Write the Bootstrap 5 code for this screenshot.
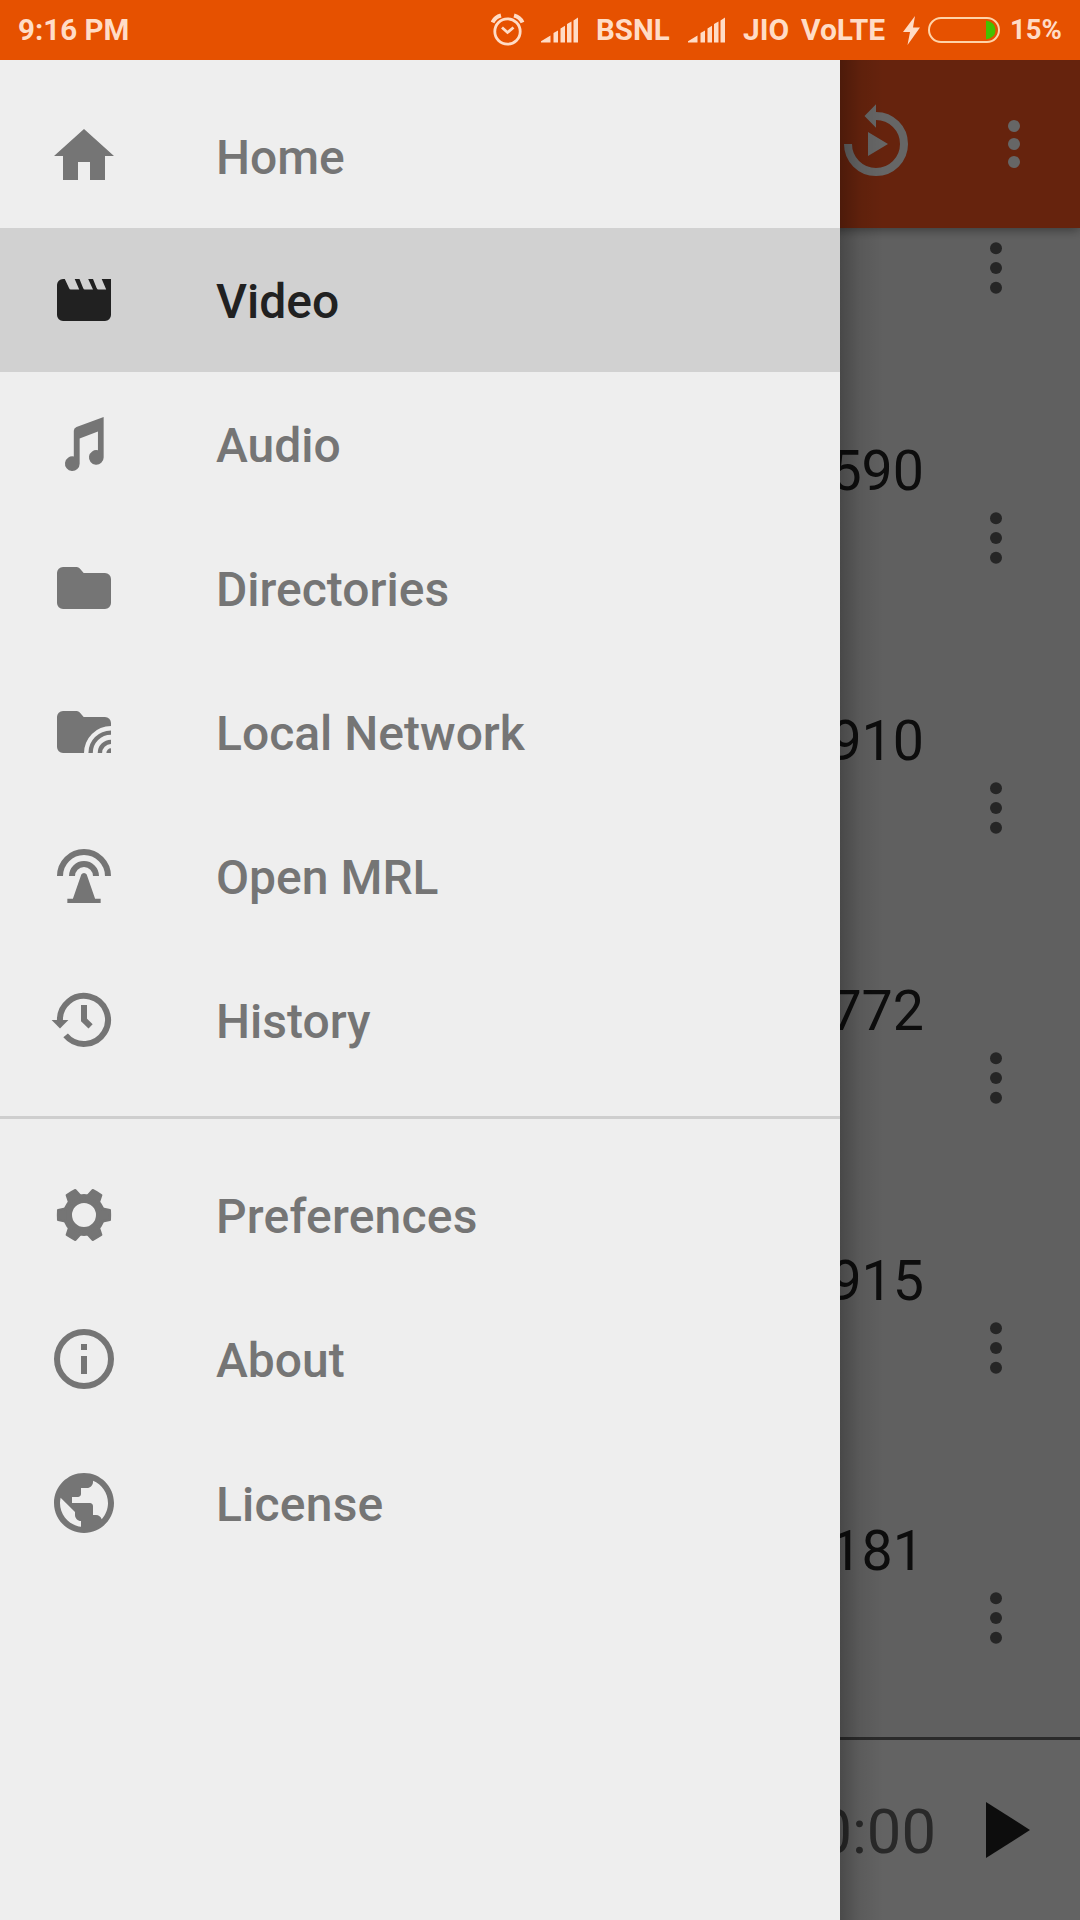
<!DOCTYPE html>
<html lang="en">
<head>
<meta charset="utf-8">
<meta name="viewport" content="width=device-width, initial-scale=1">
<title>Video</title>
<link href="https://cdn.jsdelivr.net/npm/bootstrap@5.3.0/dist/css/bootstrap.min.css" rel="stylesheet">
<style>
  body { font-family: Roboto, "Liberation Sans", sans-serif; background: #f0f0f0; }
  .screen { width: 1080px; height: 1920px; }
  svg { display: block; flex: none; }

  .status { height: 60px; background: #e65100; color: #ffdcc6; font-size: 30px; font-weight: 700; line-height: 60px; padding: 0 17px 0 18px; z-index: 5; white-space: nowrap; }
  .st-clock { font-size: 29.5px; }
  .st-alarm { width: 50px; }
  .st-signal { width: 55px; }
  .st-bsnl { width: 92px; font-size: 29.5px; }
  .st-jio { width: 58px; }
  .st-volte { width: 102px; }
  .st-bolt { width: 25px; }
  .st-battery { width: 82px; }
  .st-pct { width: 53px; font-size: 27.5px; }

  .appbar { height: 168px; background: #ff5722; color: #fff; padding-right: 48px; gap: 84px; box-shadow: 0 2px 10px rgba(0,0,0,.4); z-index: 1; }
  .media-list { height: 1509px; }
  .media-item { height: 270px; padding: 72px 72px 0 0; color: #212121; }
  .media-item.partial { height: 135px; padding-top: 10px; }
  .media-name { font-size: 55.5px; line-height: 74px; height: 73px; margin-right: 84px; }
  .kebab { color: #5f5f5f; }
  .player { height: 183px; border-top: 3px solid #6b6b6b; background: #f7f7f7; padding-right: 48px; gap: 50px; color: #212121; }
  .elapsed { font-size: 61.5px; line-height: 1; padding-top: 5px; color: #666; }

  .scrim { background: rgba(0,0,0,.6); z-index: 2; }
  .drawer { top: 60px; width: 840px; height: 1860px; background: #eee; z-index: 3; padding: 24px 0; }
  .drawer-edge { top: 60px; left: 840px; width: 44px; height: 1860px; z-index: 3; background: linear-gradient(90deg, rgba(0,0,0,.25), rgba(0,0,0,.08) 45%, transparent); }
  .menu-link { height: 144px; padding: 0 48px; gap: 96px; font-size: 48px; font-weight: 500; line-height: 1; color: #757575; text-decoration: none; }
  .menu-link span { padding-top: 3px; }
  .menu-link.active { background: #d1d1d1; color: #212121; }
  .wide-text { letter-spacing: .2px; }
  .menu-rule { height: 3px; margin: 24px 0; background: #cecece; }
</style>
<script src="https://cdn.jsdelivr.net/npm/bootstrap@5.3.0/dist/js/bootstrap.bundle.min.js"></script>
</head>
<body>
<svg width="0" height="0" class="position-absolute">
  <defs>
    <symbol id="dots" viewBox="0 0 24 60"><circle cx="12" cy="10.3" r="6"/><circle cx="12" cy="30" r="6"/><circle cx="12" cy="49.7" r="6"/></symbol>
    <symbol id="bars" viewBox="0 0 38 26"><path d="M0 25.5V24.2L9.500 18.500V25.500ZM12.500 25.500V16L17 13.500V25.500ZM19.500 25.500V11.500L24 8.800V25.500ZM26 25.500V7L30.500 4.500V25.500ZM32.500 25.500V3.500L37 .5V25.500Z"/></symbol>
    <path id="tooth" d="M17.500 9.700L20.600 10.350Q20.700 12 20.600 13.650L17.500 14.300Z"/>
  </defs>
</svg>

<div class="screen position-relative overflow-hidden d-flex flex-column">
  <header class="status position-relative d-flex align-items-center">
    <span class="st-clock me-auto">9:16 PM</span>
    <span class="st-alarm"><svg width="34" height="34" viewBox="0 0 34 34" fill="none" stroke="currentColor"><circle cx="16.500" cy="18.500" r="12.700" stroke-width="2.800"/><path d="M11 14.500l5.500 5 6-5" stroke-width="2.800"/><path d="M1.500 9.500Q4 4 10 2.500M31.500 9.500Q29 4 23 2.500" stroke-width="4"/></svg></span>
    <span class="st-signal"><svg width="38" height="26" fill="currentColor"><use href="#bars"/></svg></span>
    <span class="st-bsnl">BSNL</span>
    <span class="st-signal"><svg width="38" height="26" fill="currentColor"><use href="#bars"/></svg></span>
    <span class="st-jio">JIO</span>
    <span class="st-volte">VoLTE</span>
    <span class="st-bolt"><svg width="18" height="30" viewBox="0 0 18 30" fill="currentColor"><path d="M12 1L0 17H7L4.500 30L17 12.500H10Z"/></svg></span>
    <span class="st-battery"><svg width="72" height="26" viewBox="0 0 72 26"><path d="M58 3.500Q67.500 5 67.500 13T58 22.500Z" fill="#45c100"/><rect x="1" y="1" width="70" height="24" rx="12" fill="none" stroke="#ffd3a8" stroke-width="2"/></svg></span>
    <span class="st-pct">15%</span>
  </header>

  <div class="appbar position-relative d-flex align-items-center justify-content-end">
    <svg width="72" height="88" viewBox="0 0 72 88"><path d="M8 44A28 28 0 1 0 36 16" fill="none" stroke="currentColor" stroke-width="8"/><path d="M36 4.300V27.700L24.500 16ZM28 32V56L48 44Z" fill="currentColor"/></svg>
    <svg width="36" height="60" viewBox="0 0 36 60" fill="currentColor"><circle cx="18" cy="12" r="6"/><circle cx="18" cy="30" r="6"/><circle cx="18" cy="48" r="6"/></svg>
  </div>

  <main class="media-list">
    <div class="media-item partial d-flex flex-column align-items-end"><svg class="kebab" width="24" height="60" fill="currentColor"><use href="#dots"/></svg></div>
    <div class="media-item d-flex flex-column align-items-end"><div class="media-name">590</div><svg class="kebab" width="24" height="60" fill="currentColor"><use href="#dots"/></svg></div>
    <div class="media-item d-flex flex-column align-items-end"><div class="media-name">910</div><svg class="kebab" width="24" height="60" fill="currentColor"><use href="#dots"/></svg></div>
    <div class="media-item d-flex flex-column align-items-end"><div class="media-name">772</div><svg class="kebab" width="24" height="60" fill="currentColor"><use href="#dots"/></svg></div>
    <div class="media-item d-flex flex-column align-items-end"><div class="media-name">915</div><svg class="kebab" width="24" height="60" fill="currentColor"><use href="#dots"/></svg></div>
    <div class="media-item d-flex flex-column align-items-end"><div class="media-name">181</div><svg class="kebab" width="24" height="60" fill="currentColor"><use href="#dots"/></svg></div>
  </main>

  <footer class="player d-flex align-items-center justify-content-end">
    <span class="elapsed">0:00</span>
    <svg width="46" height="56" viewBox="0 0 46 56" fill="currentColor"><path d="M0 0L44 28L0 56Z"/></svg>
  </footer>

  <div class="scrim position-absolute top-0 start-0 w-100 h-100"></div>
  <div class="drawer-edge position-absolute"></div>

  <nav class="drawer position-absolute start-0 d-flex flex-column">
    <a href="#" class="menu-link d-flex align-items-center">
      <svg width="72" height="72" viewBox="0 0 24 24" fill="currentColor"><path d="M10 20v-6h4v6h5v-8h3L12 3 2 12h3v8z"/></svg><span>Home</span></a>
    <a href="#" class="menu-link active d-flex align-items-center">
      <svg width="72" height="72" viewBox="0 0 24 24" fill="currentColor"><path d="M5.600 5L7 8Q7.200 8.500 7.600 8.500H10.400L8.900 5H10.500L11.700 8Q11.900 8.500 12.300 8.500H15L13.400 5H15L16.200 8Q16.400 8.500 16.800 8.500H19.400L17.900 5H21V17A2 2 0 0 1 19 19H5A2 2 0 0 1 3 17V7A2 2 0 0 1 5 5Z"/></svg><span>Video</span></a>
    <a href="#" class="menu-link d-flex align-items-center">
      <svg width="72" height="72" viewBox="0 0 24 24" fill="currentColor"><path d="M18.550 3V16.500A2.450 2.450 0 1 1 16.650 14.100V7.800L10.550 10.200V18.550A2.450 2.450 0 1 1 8.600 16.150V7.600Q8.600 6.700 9.500 6.300Z"/></svg><span>Audio</span></a>
    <a href="#" class="menu-link d-flex align-items-center">
      <svg width="72" height="72" viewBox="0 0 24 24" fill="currentColor"><path d="M5 5H9.600Q10.200 5 10.600 5.500L11.900 7H19A2 2 0 0 1 21 9V17A2 2 0 0 1 19 19H5A2 2 0 0 1 3 17V7A2 2 0 0 1 5 5Z"/></svg><span>Directories</span></a>
    <a href="#" class="menu-link d-flex align-items-center">
      <svg width="72" height="72" viewBox="0 0 24 24" fill="currentColor"><path d="M5 5H9.600Q10.200 5 10.600 5.500L11.900 7H19A2 2 0 0 1 21 9V10A9 9 0 0 0 12 19H5A2 2 0 0 1 3 17V7A2 2 0 0 1 5 5Z"/><path d="M14.200 19A6.800 6.800 0 0 1 21 12.200M17.300 19A3.700 3.700 0 0 1 21 15.300" fill="none" stroke="currentColor" stroke-width="1.450"/><path d="M19.450 19A1.550 1.550 0 0 1 21 17.450V19Z"/></svg><span>Local Network</span></a>
    <a href="#" class="menu-link d-flex align-items-center">
      <svg width="72" height="72" viewBox="0 0 24 24" fill="currentColor"><path d="M4 12A8 8 0 0 1 20 12M8 12A4 4 0 0 1 16 12" fill="none" stroke="currentColor" stroke-width="2"/><path d="M11.100 11.500Q11.400 11 12 11T12.900 11.500L15.700 19.550H17.550V21H6.450V19.550H8.300Z"/></svg><span>Open MRL</span></a>
    <a href="#" class="menu-link d-flex align-items-center">
      <svg width="72" height="72" viewBox="0 0 24 24" fill="currentColor"><path d="M4 12.500A8 8 0 1 1 5.870 17.140M12 7V12L14.200 14.100" fill="none" stroke="currentColor" stroke-width="2"/><path d="M1.200 12H6.800L4 14.800Z"/></svg><span>History</span></a>
    <div class="menu-rule flex-shrink-0"></div>
    <a href="#" class="menu-link d-flex align-items-center">
      <svg width="72" height="72" viewBox="0 0 24 24" fill="currentColor"><circle cx="12" cy="12" r="5.500" fill="none" stroke="currentColor" stroke-width="3"/><g stroke="currentColor" stroke-width=".8" stroke-linejoin="round"><use href="#tooth"/><use href="#tooth" transform="rotate(60 12 12)"/><use href="#tooth" transform="rotate(120 12 12)"/><use href="#tooth" transform="rotate(180 12 12)"/><use href="#tooth" transform="rotate(240 12 12)"/><use href="#tooth" transform="rotate(300 12 12)"/></g></svg><span class="wide-text">Preferences</span></a>
    <a href="#" class="menu-link d-flex align-items-center">
      <svg width="72" height="72" viewBox="0 0 24 24" fill="currentColor"><circle cx="12" cy="12" r="9" fill="none" stroke="currentColor" stroke-width="2"/><path d="M11 7h2v2h-2zM11 11h2v6h-2z"/></svg><span>About</span></a>
    <a href="#" class="menu-link d-flex align-items-center">
      <svg width="72" height="72" viewBox="0 0 24 24" fill="currentColor"><path d="M12 2C6.480 2 2 6.480 2 12s4.480 10 10 10 10-4.480 10-10S17.520 2 12 2zm-1 17.930c-3.950-.49-7-3.850-7-7.930 0-.62.08-1.210.21-1.790L9 15v1c0 1.100.9 2 2 2v1.930zm6.900-2.540c-.26-.81-1-1.390-1.900-1.390h-1v-3c0-.55-.45-1-1-1H8v-2h2c.55 0 1-.45 1-1V7h2c1.100 0 2-.9 2-2v-.41c2.930 1.190 5 4.060 5 7.410 0 2.080-.8 3.970-2.100 5.390z"/></svg><span class="wide-text">License</span></a>
  </nav>
</div>
</body>
</html>
